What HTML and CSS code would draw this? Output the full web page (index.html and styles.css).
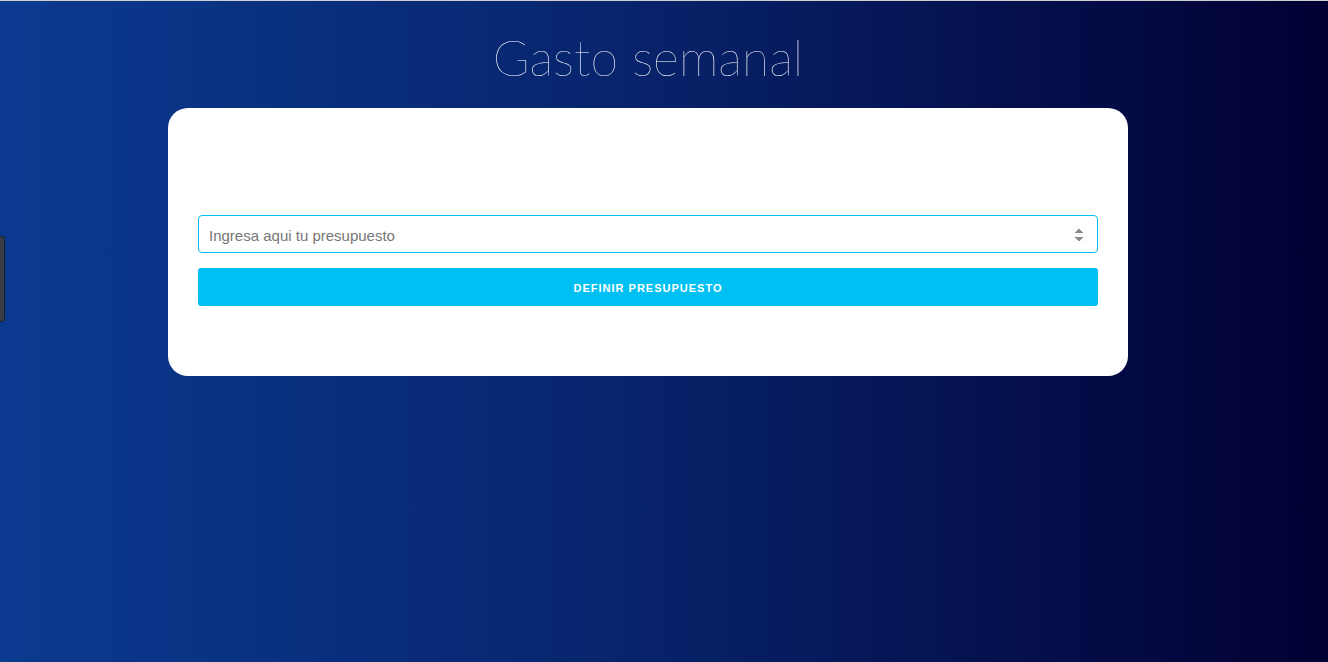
FILE: index.html
```html
<!DOCTYPE html>
<html lang="es">
<head>
<meta charset="utf-8">
<title>Gasto semanal</title>
<link rel="stylesheet" href="styles.css">
</head>
<body>
<div class="side-tab"></div>
<main class="app">
  <h1 class="title">Gasto semanal</h1>
  <section class="card">
    <form class="budget-form">
      <input class="budget-input" type="number" placeholder="Ingresa aqui tu presupuesto" autofocus>
      <button class="budget-btn" type="button">Definir presupuesto</button>
    </form>
  </section>
</main>
</body>
</html>
```
FILE: styles.css
```css
html, body {
  margin: 0;
  height: 100%;
}
body {
  background: linear-gradient(to right, #0b3a90 0%, #08256e 45%, #020033 100%);
  border-top: 1px solid #cfcfcf;
  box-sizing: border-box;
  padding-right: 32px;
  font-family: "Liberation Sans", Arial, sans-serif;
  overflow: hidden;
}
.side-tab {
  position: absolute;
  left: -4px;
  top: 236px;
  width: 7px;
  height: 84px;
  background: #373d47;
  border: 1px solid #1c1f25;
  border-radius: 3px;
}
.app {
  width: 960px;
  margin: 0 auto;
  display: flex;
  flex-direction: column;
  align-items: stretch;
}
.title {
  margin: 26px 0 0;
  height: 81px;
  text-align: center;
  font-family: "Lato", sans-serif;
  font-weight: 100;
  font-size: 50px;
  line-height: 60px;
  color: #ffffff;
}
.card {
  background: #ffffff;
  border-radius: 20px;
  padding: 107px 30px 70px;
}
.budget-form {
  display: flex;
  flex-direction: column;
  gap: 15px;
}
.budget-input {
  box-sizing: border-box;
  height: 38px;
  width: 100%;
  border: 1px solid #00c0f3;
  border-radius: 4px;
  padding: 2px 10px 0;
  font-family: "Liberation Sans", Arial, sans-serif;
  font-size: 15px;
  color: #333;
  outline: none;
}
.budget-input::placeholder {
  color: #767676;
}
.budget-btn {
  height: 38px;
  border: none;
  border-radius: 3px;
  background: #00c0f3;
  color: #ffffff;
  font-family: "Liberation Sans", Arial, sans-serif;
  font-weight: bold;
  font-size: 11px;
  letter-spacing: 1px;
  text-transform: uppercase;
  padding-top: 2px;
  cursor: pointer;
}
```
